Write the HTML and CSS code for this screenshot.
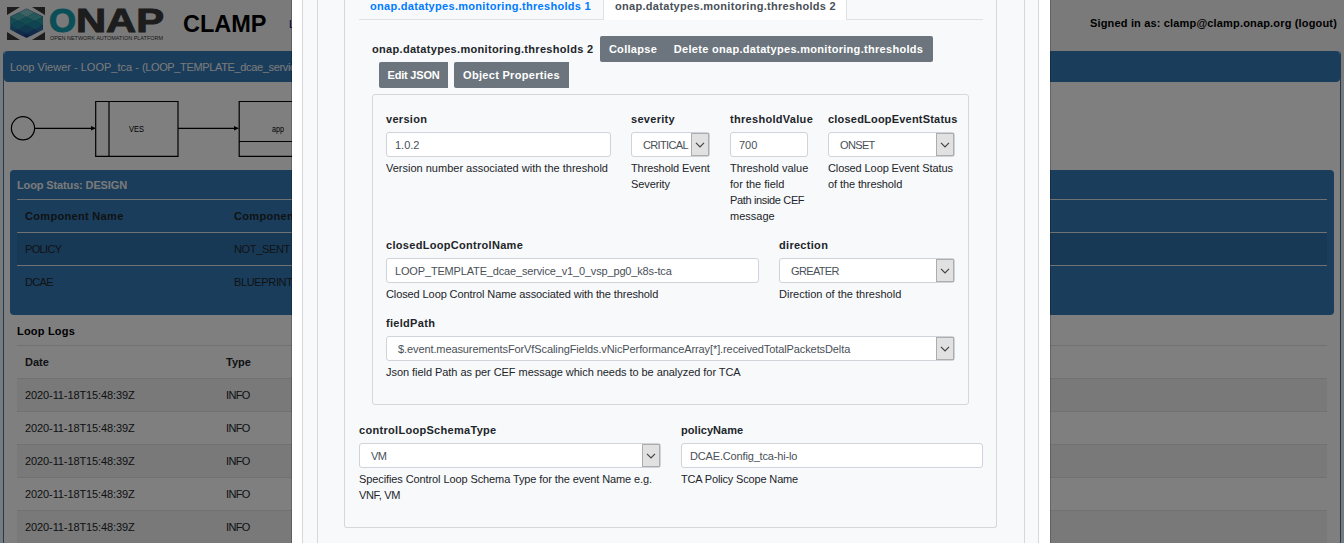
FILE: index.html
```html
<!DOCTYPE html>
<html lang="en">
<head>
<meta charset="utf-8">
<title>CLAMP</title>
<link rel="stylesheet" href="styles.css">
</head>
<body>
<header class="topbar">
  <svg class="logo" width="160" height="36" viewBox="0 0 160 36">
    <clipPath id="hex"><path d="M19.500 1.500 36 9.500V22.500L19.500 31 3.500 22.500V9.500z"/></clipPath>
    <path fill="#3a3a3a" d="M0 0h38v33H0z"/>
    <path fill="#f2f2f2" d="M13 0H25L38 8V25L25 33H13L0 25V8z"/>
    <g clip-path="url(#hex)">
      <path fill="#1d3f84" d="M0 0h38v33H0z"/>
      <path fill="#7cc4c6" d="M19.500 1.500l8.200 4.200-8.200 4.200-8.200-4.200z"/>
      <path fill="#4cb0b2" d="M11.300 5.700l8.200 4.200-8.200 4.200-8.200-4.200zM27.700 5.700l8.200 4.200-8.200 4.200-8.200-4.200z"/>
      <path fill="#2597a0" d="M19.500 9.900l8.200 4.200-8.200 4.200-8.200-4.200zM3.100 9.900l8.200 4.200-8.200 4.200-8.200-4.200zM35.900 9.900l8.200 4.200-8.200 4.200-8.200-4.200z"/>
      <path fill="#2088a0" d="M11.300 14.100l8.200 4.200-8.200 4.200-8.200-4.200zM27.700 14.100l8.200 4.200-8.200 4.200-8.200-4.200z"/>
      <path fill="#2470a0" d="M19.500 18.300l8.200 4.200-8.200 4.200-8.200-4.200zM3.100 18.300l8.200 4.200-8.200 4.200-8.200-4.200zM35.900 18.300l8.200 4.200-8.200 4.200-8.200-4.200z"/>
      <path fill="#235896" d="M11.300 22.500l8.200 4.200-8.200 4.200-8.200-4.200zM27.700 22.500l8.200 4.200-8.200 4.200-8.200-4.200z"/>
    </g>
    <text class="logo-o" x="42" y="24.500" textLength="27" lengthAdjust="spacingAndGlyphs">O</text>
    <text class="logo-nap" x="69" y="24.500" textLength="88" lengthAdjust="spacingAndGlyphs">NAP</text>
    <text class="logo-sub" x="43" y="32.500" textLength="113" lengthAdjust="spacingAndGlyphs">OPEN NETWORK AUTOMATION PLATFORM</text>
  </svg>
  <span class="brand">CLAMP</span>
  <span class="nav">Loop</span>
  <span class="signed">Signed in as: clamp@clamp.onap.org (logout)</span>
</header>
<main class="viewer">
  <div class="viewer-title">Loop Viewer - LOOP_tca - <span class="template">(LOOP_TEMPLATE_dcae_service)</span></div>
  <svg class="diagram" width="400" height="88" viewBox="4 82 400 88">
    <g fill="none" stroke="#000" stroke-width="1.2">
      <circle cx="23" cy="128.3" r="11.6"/>
      <path d="M35 128.3H92M178 128.3H235"/>
      <path d="M95.7 101.5H178V156.3H95.7zM109 101.5V156.3M239.2 101.5H320V156.3H239.2zM239 141.5H320"/>
    </g>
    <path d="M91 126 96 128.3 91 130.600zM234 126 239 128.3 234 130.600z"/>
    <text class="node" x="136.500" y="132" textLength="15" lengthAdjust="spacingAndGlyphs" text-anchor="middle">VES</text>
    <text class="node" x="278" y="132" textLength="12" lengthAdjust="spacingAndGlyphs" text-anchor="middle">app</text>
  </svg>
  <section class="status">
    <h2>Loop Status: DESIGN</h2>
    <div class="row head"><span>Component Name</span><span>Component State</span></div>
    <div class="row odd"><span class="caps">POLICY</span><span class="t3">NOT_SENT</span></div>
    <div class="row"><span class="caps">DCAE</span><span class="t3">BLUEPRINT_DEPLOYED</span></div>
  </section>
  <section class="logs">
    <h2>Loop Logs</h2>
    <div class="row head"><span>Date</span><span>Type</span></div>
    <div class="row odd"><span class="t1">2020-11-18T15:48:39Z</span><span class="caps">INFO</span></div>
    <div class="row"><span class="t1">2020-11-18T15:48:39Z</span><span class="caps">INFO</span></div>
    <div class="row odd"><span class="t1">2020-11-18T15:48:39Z</span><span class="caps">INFO</span></div>
    <div class="row"><span class="t1">2020-11-18T15:48:39Z</span><span class="caps">INFO</span></div>
    <div class="row odd"><span class="t1">2020-11-18T15:48:39Z</span><span class="caps">INFO</span></div>
  </section>
</main>
<div class="backdrop">
  <div class="modal">
    <div class="card-a"><div class="card-b"><div class="card-c">
      <div class="tabs">
        <span class="tab">onap.datatypes.monitoring.thresholds 1</span>
        <span class="tab active">onap.datatypes.monitoring.thresholds 2</span>
      </div>
      <div class="title-row">
        <span class="title">onap.datatypes.monitoring.thresholds 2</span>
        <div class="group"><button class="b-collapse">Collapse</button><button class="b-delete">Delete onap.datatypes.monitoring.thresholds</button></div>
      </div>
      <div class="tools"><button class="b-json">Edit JSON</button><button class="b-props">Object Properties</button></div>
      <div class="box">
        <div class="fields r1">
          <div class="field"><label>version</label><div class="input">1.0.2</div><p>Version number associated with the threshold</p></div>
          <div class="field"><label>severity</label><div class="input select"><span class="caps">CRITICAL</span><i><svg width="10" height="6" viewBox="0 0 10 6"><path d="M1 .8 5 4.800 9 .8"/></svg></i></div><p class="t1">Threshold Event<br>Severity</p></div>
          <div class="field"><label>thresholdValue</label><div class="input">700</div><p>Threshold value<br>for the field<br><span class="t3">Path inside CEF</span><br>message</p></div>
          <div class="field"><label class="tight">closedLoopEventStatus</label><div class="input select"><span class="caps">ONSET</span><i><svg width="10" height="6" viewBox="0 0 10 6"><path d="M1 .8 5 4.800 9 .8"/></svg></i></div><p class="t1">Closed Loop Event Status<br>of the threshold</p></div>
        </div>
        <div class="fields r2">
          <div class="field"><label>closedLoopControlName</label><div class="input t2">LOOP_TEMPLATE_dcae_service_v1_0_vsp_pg0_k8s-tca</div><p class="t1">Closed Loop Control Name associated with the threshold</p></div>
          <div class="field"><label>direction</label><div class="input select"><span class="caps">GREATER</span><i><svg width="10" height="6" viewBox="0 0 10 6"><path d="M1 .8 5 4.800 9 .8"/></svg></i></div><p>Direction of the threshold</p></div>
        </div>
        <div class="fields r3">
          <div class="field"><label>fieldPath</label><div class="input select"><span class="t1">$.event.measurementsForVfScalingFields.vNicPerformanceArray[*].receivedTotalPacketsDelta</span><i><svg width="10" height="6" viewBox="0 0 10 6"><path d="M1 .8 5 4.800 9 .8"/></svg></i></div><p class="t0">Json field Path as per CEF message which needs to be analyzed for TCA</p></div>
        </div>
      </div>
      <div class="fields r4">
        <div class="field"><label>controlLoopSchemaType</label><div class="input select"><span class="caps">VM</span><i><svg width="10" height="6" viewBox="0 0 10 6"><path d="M1 .8 5 4.800 9 .8"/></svg></i></div><p class="t1">Specifies Control Loop Schema Type for the event Name e.g.<br><span class="t3">VNF, VM</span></p></div>
        <div class="field"><label class="plain">policyName</label><div class="input t2">DCAE.Config_tca-hi-lo</div><p class="t2">TCA Policy Scope Name</p></div>
      </div>
    </div></div></div>
  </div>
</div>
</body>
</html>
```
FILE: styles.css
```css
* { box-sizing: border-box; }
html { height: 543px; overflow: hidden; }
body {
  margin: 0;
  height: 543px;
  overflow: hidden;
  background: #f5f5f5;
  color: #212529;
  font: 11px/16px "Liberation Sans", Arial, sans-serif;
  white-space: nowrap;
}
h2, p { margin: 0; font-size: inherit; }

.t0 { letter-spacing: -.05px; }
.t1 { letter-spacing: -.1px; }
.t2 { letter-spacing: -.16px; }
.t3 { letter-spacing: -.35px; }
.caps { letter-spacing: -.65px; }

.topbar { display: flex; height: 51px; padding-left: 7px; color: #000; }
.logo { margin-top: 7px; flex: none; overflow: visible; }
.logo text { font-family: "Liberation Sans", Arial, sans-serif; }
.logo-o { font-size: 33px; font-weight: bold; fill: #149cae; stroke: #149cae; }
.logo-nap { font-size: 33px; font-weight: bold; fill: #3a3a3a; stroke: #3a3a3a; }
.logo-sub { font-size: 5.5px; fill: #333; }
.brand { margin: 9px 0 0 16px; width: 106px; font-size: 23.5px; font-weight: bold; line-height: 30px; }
.nav { margin-top: 16px; color: #00008b; }
.signed { margin: 15px 7px 0 auto; font-weight: bold; letter-spacing: .165px; }

.viewer { height: 492px; overflow: hidden; margin: 0 3px; border: solid #337ab7; border-width: 0 1px; border-radius: 4px 4px 0 0; background: #fff; }
.viewer-title { height: 31px; padding-left: 6px; border-radius: 4px; background: #337ab7; color: #f5f5f5; line-height: 32px; }
.template { letter-spacing: -.35px; }
.diagram { display: block; height: 88px; }
.node { font-size: 9px; }
.status { height: 145px; margin: 0 6px; padding: 0 7px; border-radius: 4px; background: #337ab7; }
.status h2 { height: 29px; color: #f5f5f5; line-height: 30px; letter-spacing: -.13px; }
.logs { padding: 0 13px; }
.logs h2 { height: 30px; color: #000; line-height: 32px; letter-spacing: .2px; }
.row { display: flex; height: 33px; padding-left: 8px; border-top: 1px solid #dee2e6; line-height: 33px; }
.row span { width: 209px; }
.logs .row span { width: 201px; }
.status .head { letter-spacing: .32px; }
.head { font-weight: bold; }
.odd { background: rgba(0, 0, 0, .05); }

.backdrop { position: absolute; inset: 0; display: flex; justify-content: center; background: rgba(0, 0, 0, .5); }
.modal { width: 760px; height: 543px; margin-left: -2px; padding: 0 11px 0 10px; border: solid rgba(0, 0, 0, .2); border-width: 0 1px; background: #fff; background-clip: padding-box; }
.card-a, .card-b { height: 543px; border: solid #d5d8db; border-width: 0 1px; background: #f8f9fb; }
.card-a { padding: 0 13px 0 14px; }
.card-b { padding: 0 27px 0 26px; }
.card-c { height: 528px; padding: 0 13px 0 14px; border: 1px solid #d5d8db; border-top: 0; border-radius: 0 0 3px 3px; }

.tabs { display: flex; height: 20px; border-bottom: 1px solid #dee2e6; font-weight: bold; line-height: 13px; letter-spacing: .3px; }
.tab { width: 244px; padding-left: 11px; color: #007bff; }
.tab.active { height: 20px; border: solid #dee2e6; border-width: 0 1px; background: #fff; color: #495057; }
.title-row { display: flex; height: 26px; margin: 16px 0 0 13px; font-weight: bold; line-height: 26px; }
.title { width: 228px; letter-spacing: .31px; }
.group { display: flex; border-radius: 2px; overflow: hidden; }
button { height: 26px; padding: 0; border: 0; background: #6c757d; color: #fff; font: bold 11px "Liberation Sans", Arial, sans-serif; letter-spacing: .3px; }
.b-collapse { width: 66px; }
.b-delete { width: 267px; padding-right: 2px; }
.tools { display: flex; gap: 6px; height: 26px; margin-left: 20px; }
.tools button { border-radius: 2px 0 0 2px; }
.tools .b-json { width: 69px; letter-spacing: -.2px; }
.b-props { width: 115px; }

.box { width: 597px; height: 311px; margin: 6px 0 0 13px; padding: 16px 13px 0; border: 1px solid #d5d8db; border-radius: 3px; }
.fields { display: grid; gap: 20px; }
.r1 { height: 126px; grid-template-columns: 225px 79px 78px 127px; }
.r2 { height: 78px; grid-template-columns: 373px 176px; }
.r3 { grid-template-columns: 569px; }
.r4 { margin-top: 17px; grid-template-columns: 302px 302px; }
label { display: block; height: 21px; font-weight: bold; letter-spacing: .3px; }
label.tight { letter-spacing: .2px; }
label.plain { letter-spacing: .05px; }
.input { display: flex; height: 25px; margin-bottom: 3px; padding-left: 8px; border: 1px solid #ced4da; border-radius: 3px; background: #fff; color: #495057; line-height: 25px; }
.select { justify-content: space-between; padding-left: 11px; }
.select i { display: flex; flex: none; align-items: center; justify-content: center; width: 18px; height: 23px; border: 1px solid #adadad; background: #e1e1e1; }
.select path { fill: none; stroke: #444; stroke-width: 1.2; }
```
